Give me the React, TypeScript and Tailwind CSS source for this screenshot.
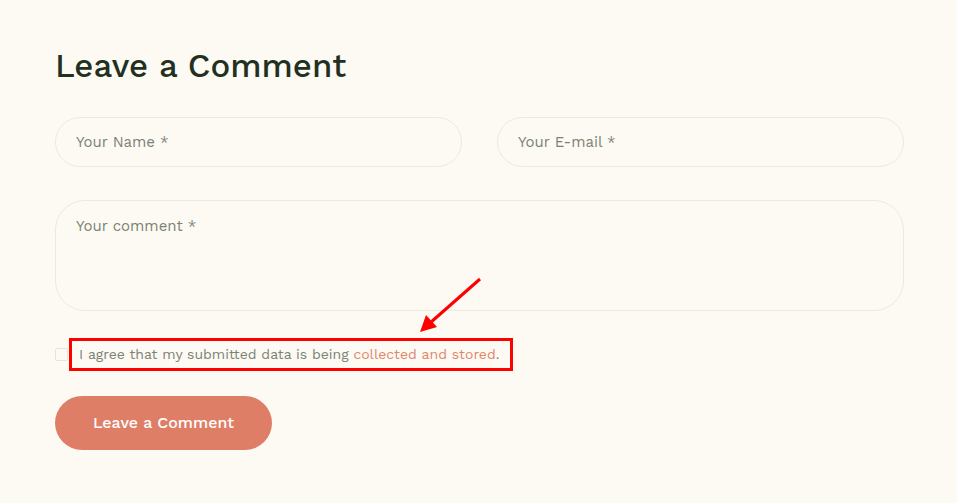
import React from "react";

const font = { fontFamily: '"Work Sans", "Open Sans", "Liberation Sans", sans-serif' };

function Field({ placeholder }: { placeholder: string }) {
  return (
    <input
      placeholder={placeholder}
      className="h-[50px] w-full rounded-full border border-[#ece9df] bg-transparent px-[20px] text-[15px] text-[#7b8276] placeholder:text-[#7b8276] outline-none"
    />
  );
}

export default function App() {
  return (
    <div className="min-h-[503px] w-full bg-[#fdfaf3]" style={font}>
      <div className="w-[904px] pl-[55px] pt-[44px]">
        <h2 className="text-[33px] leading-[44px] font-medium text-[#22301f]">
          Leave a Comment
        </h2>

        <div className="mt-[29px] grid grid-cols-2 gap-x-[35px]">
          <Field placeholder="Your Name *" />
          <Field placeholder="Your E-mail *" />
        </div>

        <textarea
          placeholder="Your comment *"
          className="mt-[33px] block h-[111px] w-full resize-none rounded-[30px] border border-[#ece9df] bg-transparent px-[20px] py-[14px] text-[15px] text-[#7b8276] placeholder:text-[#7b8276] outline-none"
        />

        <div className="relative mt-[27px] flex items-center">
          <span className="h-[13px] w-[13px] rounded-[2px] border border-[#e8e4da] bg-[#fdfaf3]" />
          <div className="ml-px flex h-[33px] items-center border-[3px] border-[#ff0000] pl-[7px] pr-[11px] text-[14px] text-[#7b8276]">
            I agree that my submitted data is being&nbsp;
            <span className="text-[#e0866c]">collected and stored</span>.
          </div>
          <svg
            className="absolute left-[305px] top-[-61px]"
            width="130"
            height="64"
            viewBox="0 0 130 64"
          >
            <line x1="120" y1="2" x2="70" y2="46" stroke="#ff0000" strokeWidth="3" />
            <polygon points="60,55 66,38 77,50" fill="#ff0000" />
          </svg>
        </div>

        <button className="mt-[25px] h-[54px] w-[217px] rounded-full bg-[#df7e66] text-[16px] font-medium text-white">
          Leave a Comment
        </button>
      </div>
    </div>
  );
}
